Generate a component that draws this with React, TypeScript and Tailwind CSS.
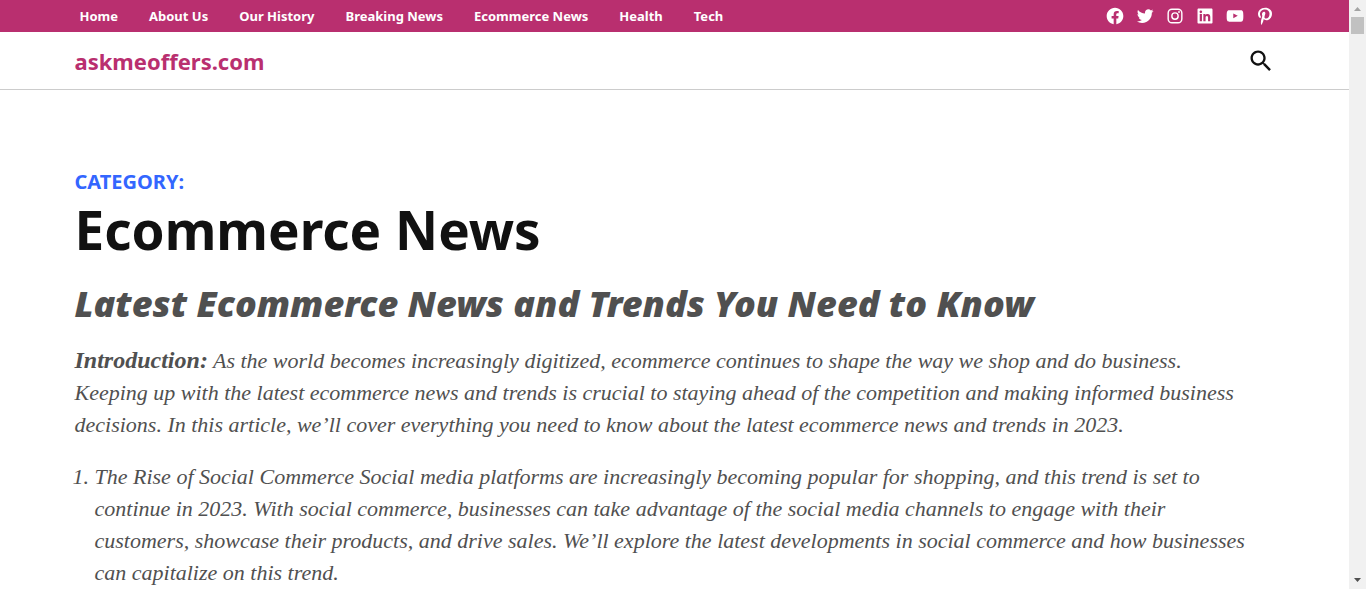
import React from "react";

const navItems = ["Home", "About Us", "Our History", "Breaking News", "Ecommerce News", "Health", "Tech"];

const socialIcons: { label: string; shape: React.ReactNode }[] = [
  {
    label: "Facebook",
    shape: (
      <path d="M12 2C6.5 2 2 6.5 2 12c0 5 3.7 9.1 8.4 9.9v-7H7.9V12h2.5V9.8c0-2.5 1.5-3.9 3.8-3.9 1.1 0 2.2.2 2.2.2v2.5h-1.3c-1.2 0-1.6.8-1.6 1.6V12h2.8l-.4 2.9h-2.3v7C18.3 21.1 22 17 22 12c0-5.5-4.5-10-10-10z" />
    ),
  },
  {
    label: "Twitter",
    shape: (
      <path d="M22.23,5.924c-0.736,0.326-1.527,0.547-2.357,0.646c0.847-0.508,1.498-1.312,1.804-2.27c-0.793,0.47-1.671,0.812-2.606,0.996C18.324,4.498,17.257,4,16.077,4c-2.266,0-4.103,1.837-4.103,4.103c0,0.322,0.036,0.635,0.106,0.935C8.67,8.867,5.647,7.234,3.623,4.751C3.27,5.357,3.067,6.062,3.067,6.814c0,1.424,0.724,2.679,1.825,3.415c-0.673-0.021-1.305-0.206-1.859-0.513c0,0.017,0,0.034,0,0.052c0,1.988,1.414,3.647,3.292,4.023c-0.344,0.094-0.707,0.144-1.081,0.144c-0.264,0-0.521-0.026-0.772-0.074c0.522,1.63,2.038,2.816,3.833,2.85c-1.404,1.1-3.174,1.756-5.096,1.756c-0.331,0-0.658-0.019-0.979-0.057c1.816,1.164,3.973,1.843,6.29,1.843c7.547,0,11.675-6.252,11.675-11.675c0-0.178-0.004-0.355-0.012-0.531C20.985,7.47,21.68,6.747,22.23,5.924z" />
    ),
  },
  {
    label: "Instagram",
    shape: (
      <>
        <rect x="3.8" y="3.8" width="16.4" height="16.4" rx="4.6" fill="none" stroke="currentColor" strokeWidth="1.7" />
        <circle cx="12" cy="12" r="3.8" fill="none" stroke="currentColor" strokeWidth="1.7" />
        <circle cx="16.8" cy="7.2" r="1.1" />
      </>
    ),
  },
  {
    label: "LinkedIn",
    shape: (
      <path d="M19.7,3H4.3C3.582,3,3,3.582,3,4.3v15.4C3,20.418,3.582,21,4.3,21h15.4c0.718,0,1.3-0.582,1.3-1.3V4.3C21,3.582,20.418,3,19.7,3z M8.339,18.338H5.667v-8.59h2.672V18.338z M7.004,8.574c-0.857,0-1.549-0.694-1.549-1.548c0-0.855,0.691-1.548,1.549-1.548c0.854,0,1.547,0.694,1.547,1.548C8.551,7.881,7.858,8.574,7.004,8.574z M18.339,18.338h-2.669v-4.177c0-0.996-0.017-2.278-1.387-2.278c-1.389,0-1.601,1.086-1.601,2.206v4.249h-2.667v-8.59h2.559v1.174h0.037c0.356-0.675,1.227-1.387,2.526-1.387c2.703,0,3.203,1.779,3.203,4.092V18.338z" />
    ),
  },
  {
    label: "YouTube",
    shape: (
      <path d="M21.8,8.001c0,0-0.195-1.378-0.795-1.985c-0.76-0.797-1.613-0.801-2.004-0.847c-2.799-0.202-6.997-0.202-6.997-0.202h-0.009c0,0-4.198,0-6.997,0.202C4.608,5.216,3.756,5.22,2.995,6.016C2.395,6.623,2.2,8.001,2.2,8.001S2,9.62,2,11.238v1.517c0,1.618,0.2,3.237,0.2,3.237s0.195,1.378,0.795,1.985c0.761,0.797,1.76,0.771,2.205,0.855c1.6,0.153,6.8,0.201,6.8,0.201s4.203-0.006,7.001-0.209c0.391-0.047,1.243-0.051,2.004-0.847c0.6-0.607,0.795-1.985,0.795-1.985s0.2-1.618,0.2-3.237v-1.517C22,9.62,21.8,8.001,21.8,8.001z M9.935,14.594l-0.001-5.62l5.404,2.82L9.935,14.594z" />
    ),
  },
  {
    label: "Pinterest",
    shape: (
      <path d="M12.289,2C6.617,2,3.606,5.648,3.606,9.622c0,1.846,1.025,4.146,2.666,4.878c0.25,0.111,0.381,0.063,0.439-0.169c0.044-0.175,0.267-1.029,0.365-1.428c0.032-0.128,0.017-0.237-0.091-0.362C6.445,11.911,6.01,10.75,6.01,9.668c0-2.777,2.194-5.464,5.933-5.464c3.23,0,5.49,2.108,5.49,5.122c0,3.407-1.794,5.768-4.13,5.768c-1.291,0-2.257-1.021-1.948-2.277c0.372-1.495,1.089-3.112,1.089-4.191c0-0.967-0.542-1.775-1.663-1.775c-1.319,0-2.379,1.309-2.379,3.059c0,1.115,0.394,1.869,0.394,1.869s-1.302,5.279-1.54,6.261c-0.405,1.666,0.053,4.368,0.094,4.604c0.021,0.126,0.167,0.169,0.25,0.063c0.129-0.165,1.699-2.419,2.142-4.051c0.158-0.59,0.817-2.995,0.817-2.995c0.43,0.784,1.681,1.446,3.013,1.446c3.963,0,6.822-3.494,6.822-7.833C20.394,5.112,16.849,2,12.289,2" />
    ),
  },
];

function TopBar() {
  return (
    <div className="bg-[#b92f6f] text-white">
      <div className="mx-auto flex h-8 max-w-[1200px] items-center justify-between">
        <nav aria-label="Secondary" className="flex gap-[31px] pl-[5px] text-[13px] leading-5 font-bold">
          {navItems.map((item) => (
            <a key={item} href="#">
              {item}
            </a>
          ))}
        </nav>
        <div className="flex gap-[10px]">
          {socialIcons.map(({ label, shape }) => (
            <a key={label} href="#" aria-label={label}>
              <svg viewBox="0 0 24 24" className="size-5 fill-current" aria-hidden="true">
                {shape}
              </svg>
            </a>
          ))}
        </div>
      </div>
    </div>
  );
}

function SiteHeader() {
  return (
    <header className="border-b border-[#ccc]">
      <div className="mx-auto flex h-[57px] max-w-[1200px] items-center justify-between">
        <a href="#" className="text-[22px] leading-7 font-bold text-[#b92f6f]">
          askmeoffers.com
        </a>
        <button type="button" aria-label="Search" className="text-[#111]">
          <svg viewBox="0 0 24 24" className="size-7 fill-current" aria-hidden="true">
            <path d="M15.5 14h-.79l-.28-.27C15.41 12.59 16 11.11 16 9.5 16 5.91 13.09 3 9.5 3S3 5.91 3 9.5 5.91 16 9.5 16c1.61 0 3.09-.59 4.23-1.57l.27.28v.79l5 4.99L20.49 19l-4.99-5zm-6 0C7.01 14 5 11.99 5 9.5S7.01 5 9.5 5 14 7.01 14 9.5 11.99 14 9.5 14z" />
          </svg>
        </button>
      </div>
    </header>
  );
}

function Scrollbar() {
  return (
    <div aria-hidden="true" className="flex w-[17px] shrink-0 flex-col items-center justify-between bg-[#f1f1f1]">
      <div className="flex flex-col items-center">
        <svg viewBox="0 0 17 17" className="size-[17px]">
          <path d="M5 11 8.5 7 12 11z" fill="#a3a3a3" />
        </svg>
        <div className="h-[17px] w-[13px] bg-[#c1c1c1]" />
      </div>
      <svg viewBox="0 0 17 17" className="size-[17px]">
        <path d="M5 6h7L8.500 10z" fill="#505050" />
      </svg>
    </div>
  );
}

export default function App() {
  return (
    <div className="flex h-screen overflow-hidden bg-white font-['Noto_Sans',sans-serif]">
      <div className="min-w-0 flex-1 overflow-hidden">
        <TopBar />
        <SiteHeader />
        <main className="mx-auto max-w-[1200px] pt-20">
          <h1 className="font-bold text-[#111]">
            <span className="block text-xl leading-6 text-[#36f] uppercase">Category:</span>
            <span className="block text-[53px] leading-[72px]">Ecommerce News</span>
          </h1>
          <div className="pr-7 font-['Liberation_Serif',serif] text-[22px] leading-8 text-[#505050] italic">
            <h2 className="mt-3.5 font-['Noto_Sans',sans-serif] text-4xl leading-[48px] font-black">
              Latest Ecommerce News and Trends You Need to Know
            </h2>
            <p className="mt-4">
              <strong className="text-2xl leading-8">Introduction:</strong> As the world becomes increasingly
              digitized, ecommerce continues to shape the way we shop and do business. Keeping up with the latest
              ecommerce news and trends is crucial to staying ahead of the competition and making informed business
              decisions. In this article, we’ll cover everything you need to know about the latest ecommerce news and
              trends in 2023.
            </p>
            <ol className="mt-5 list-decimal pl-5">
              <li>
                The Rise of Social Commerce Social media platforms are increasingly becoming popular for shopping, and
                this trend is set to continue in 2023. With social commerce, businesses can take advantage of the
                social media channels to engage with their customers, showcase their products, and drive sales. We’ll
                explore the latest developments in social commerce and how businesses can capitalize on this trend.
              </li>
            </ol>
          </div>
        </main>
      </div>
      <Scrollbar />
    </div>
  );
}
